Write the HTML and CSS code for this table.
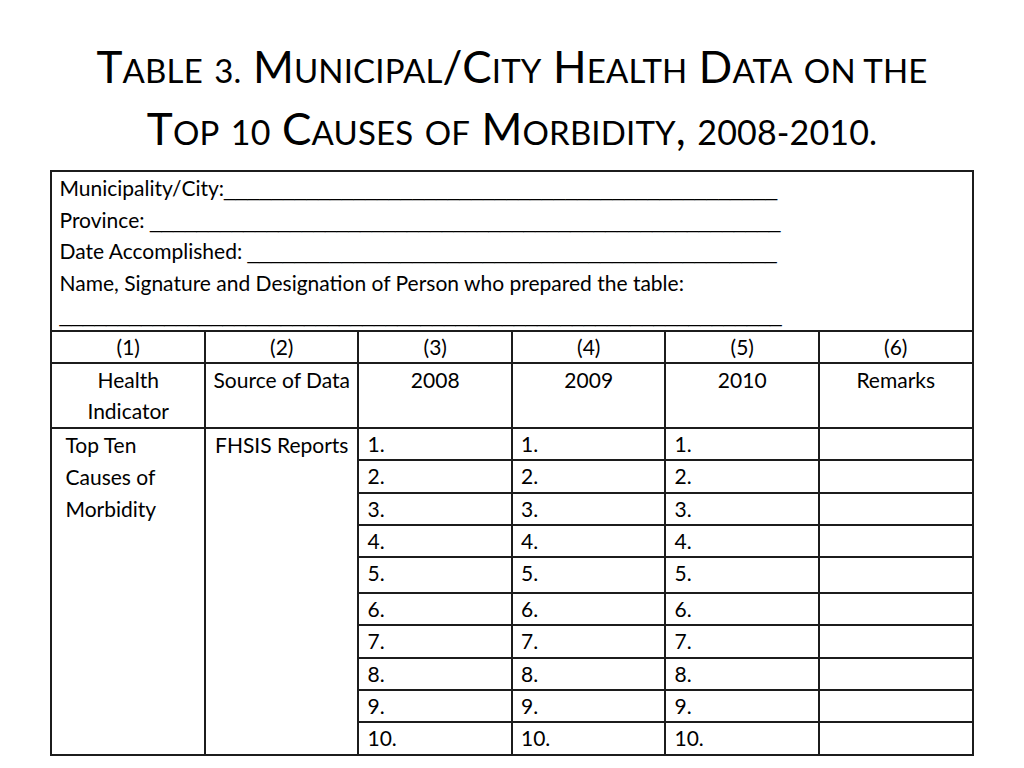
FILE: index.html
```html
<!DOCTYPE html>
<html lang="en">
<head>
<meta charset="utf-8">
<title>Table 3</title>
<link rel="stylesheet" href="styles.css">
</head>
<body>
<main class="page">
  <h1 class="title">
    <span class="tl">T<span class="sc">able</span> <span class="sc">3.</span> M<span class="sc">unicipal</span>/C<span class="sc">ity</span> H<span class="sc">ealth</span> D<span class="sc">ata</span> <span class="sc">on the</span></span>
    <span class="tl">T<span class="sc">op</span> <span class="num">10</span> C<span class="sc">auses</span> <span class="sc">of</span> M<span class="sc">orbidity</span>, <span class="num">2008-2010.</span></span>
  </h1>
  <table class="grid">
    <colgroup>
      <col class="c"><col class="c"><col class="c"><col class="c"><col class="c"><col class="c">
    </colgroup>
    <tr class="r-info">
      <td colspan="6" class="info">
        <div class="line">Municipality/City:<span class="blank b1">_______________________________________________</span></div>
        <div class="line">Province: <span class="blank b2">______________________________________________________</span></div>
        <div class="line">Date Accomplished: <span class="blank b3">_____________________________________________</span></div>
        <div class="line">Name, Signature and Designation of Person who prepared the table:</div>
        <div class="line"><span class="blank b4">______________________________________________________________</span></div>
      </td>
    </tr>
    <tr class="r-num">
      <td>(1)</td><td>(2)</td><td>(3)</td><td>(4)</td><td>(5)</td><td>(6)</td>
    </tr>
    <tr class="r-head">
      <td>Health<br>Indicator</td><td>Source of Data</td><td>2008</td><td>2009</td><td>2010</td><td>Remarks</td>
    </tr>
    <tr class="r-data first">
      <td rowspan="10" class="ind">Top Ten<br>Causes of<br>Morbidity</td>
      <td rowspan="10" class="src">FHSIS Reports</td>
      <td class="n">1.</td><td class="n">1.</td><td class="n lt">1.</td><td></td>
    </tr>
    <tr class="r-data p1"><td class="n">2.</td><td class="n">2.</td><td class="n lt">2.</td><td></td></tr>
    <tr class="r-data"><td class="n">3.</td><td class="n">3.</td><td class="n lt">3.</td><td></td></tr>
    <tr class="r-data"><td class="n">4.</td><td class="n">4.</td><td class="n lt">4.</td><td></td></tr>
    <tr class="r-data p4"><td class="n">5.</td><td class="n">5.</td><td class="n lt">5.</td><td></td></tr>
    <tr class="r-data"><td class="n">6.</td><td class="n">6.</td><td class="n lt">6.</td><td></td></tr>
    <tr class="r-data p1"><td class="n">7.</td><td class="n">7.</td><td class="n lt">7.</td><td></td></tr>
    <tr class="r-data"><td class="n">8.</td><td class="n">8.</td><td class="n lt">8.</td><td></td></tr>
    <tr class="r-data"><td class="n">9.</td><td class="n">9.</td><td class="n lt">9.</td><td></td></tr>
    <tr class="r-data p1"><td class="n">10.</td><td class="n">10.</td><td class="n lt">10.</td><td></td></tr>
  </table>
</main>
</body>
</html>
```
FILE: styles.css
```css
html, body {
  margin: 0;
  padding: 0;
  background: #fff;
}
body {
  font-family: Lato, "Open Sans", "DejaVu Sans", sans-serif;
  color: #000;
}
.page {
  width: 1024px;
  height: 768px;
  overflow: hidden;
  display: flex;
  flex-direction: column;
  align-items: center;
}
.title {
  flex-shrink: 0;
  margin: 35px 0 0 0;
  height: 135px;
  font-weight: 400;
  font-size: 44px;
  line-height: 62px;
  text-align: center;
  color: #000;
  display: flex;
  flex-direction: column;
  align-items: center;
  letter-spacing: 0.15px;
}
.tl {
  display: block;
  white-space: nowrap;
  height: 62px;
}
.sc {
  text-transform: uppercase;
  font-size: 33px;
}
.num {
  font-size: 34px;
}
.grid {
  flex-shrink: 0;
  border-collapse: collapse;
  table-layout: fixed;
  width: 923px;
  font-size: 21px;
  line-height: 30px;
  border: 2px solid #111;
}
.grid col.c {
  width: 153.5px;
}
.grid td {
  border: 2px solid #1c1c1c;
  padding: 0;
  vertical-align: top;
  text-align: center;
  white-space: nowrap;
}
.grid td.info {
  text-align: left;
  padding: 0 0 0 7px;
}
.line {
  height: 31.6px;
  line-height: 31.6px;
  white-space: nowrap;
}
.blank {
  font-family: "Liberation Sans", Arial, sans-serif;
}
.b1 { letter-spacing: 0.09px; }
.b2 { letter-spacing: 0; }
.b3 { letter-spacing: 0.08px; }
.b4 { letter-spacing: -0.03px; }
.r-head td {
  line-height: 31.5px;
  border-top-color: #707070;
  border-top-width: 1px;
}
.r-data.first td {
  border-top-color: #707070;
  border-top-width: 1px;
}
.r-data.p1 td { padding-bottom: 1px; }
.r-data.p4 td { padding-bottom: 4px; }
.grid td.ind {
  text-align: left;
  padding-left: 13px;
  line-height: 32px;
}
.grid td.src {
  text-align: center;
  line-height: 32px;
  padding-left: 0;
}
.grid td.n {
  text-align: left;
  padding-left: 8px;
}
.grid td.lt {
  border-left: 1px solid #555;
}
```
